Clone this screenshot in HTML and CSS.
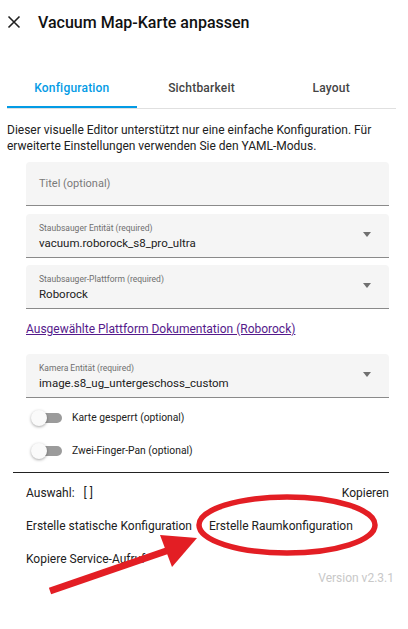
FILE: index.html
```html
<!DOCTYPE html>
<html>
<head>
<meta charset="utf-8">
<link rel="stylesheet" href="styles.css">
</head>
<body>
<div class="page">
  <header class="header">
    <svg class="close" width="14" height="14" viewBox="0 0 14 14"><path d="M1.5 1.5 L12.5 12.5 M12.5 1.5 L1.5 12.5" stroke="#212121" stroke-width="1.6" fill="none"/></svg>
    <h1 class="title">Vacuum Map-Karte anpassen</h1>
  </header>
  <nav class="tabs">
    <div class="tab active">Konfiguration</div>
    <div class="tab">Sichtbarkeit</div>
    <div class="tab">Layout</div>
  </nav>
  <p class="desc">Dieser visuelle Editor unterstützt nur eine einfache Konfiguration. Für erweiterte Einstellungen verwenden Sie den YAML-Modus.</p>
  <div class="form">
    <div class="field plain"><span class="placeholder">Titel (optional)</span></div>
    <div class="field">
      <div class="fcol"><span class="label">Staubsauger Entität (required)</span><span class="value">vacuum.roborock_s8_pro_ultra</span></div>
      <span class="arrow"></span>
    </div>
    <div class="field">
      <div class="fcol"><span class="label">Staubsauger-Plattform (required)</span><span class="value">Roborock</span></div>
      <span class="arrow"></span>
    </div>
    <a class="doclink" href="#">Ausgewählte Plattform Dokumentation (Roborock)</a>
    <div class="field">
      <div class="fcol"><span class="label">Kamera Entität (required)</span><span class="value">image.s8_ug_untergeschoss_custom</span></div>
      <span class="arrow"></span>
    </div>
    <div class="toggles">
      <div class="toggle-row"><span class="switch"><span class="knob"></span></span><span class="tlabel">Karte gesperrt (optional)</span></div>
      <div class="toggle-row"><span class="switch"><span class="knob"></span></span><span class="tlabel">Zwei-Finger-Pan (optional)</span></div>
    </div>
  </div>
  <hr class="divider">
  <div class="bottom">
    <div class="row between"><span>Auswahl:&nbsp;&nbsp; [ ]</span><span>Kopieren</span></div>
    <div class="row"><span>Erstelle statische Konfiguration</span><span class="gap-item">Erstelle Raumkonfiguration</span></div>
    <div class="row"><span>Kopiere Service-Aufruf</span></div>
    <div class="version">Version v2.3.1</div>
  </div>
  <svg class="annot" width="408" height="629" viewBox="0 0 408 629">
    <ellipse cx="287" cy="525" rx="88" ry="28" fill="none" stroke="#e31e24" stroke-width="5.5"/>
    <line x1="50" y1="591" x2="172" y2="549" stroke="#e31e24" stroke-width="7"/>
    <polygon points="197,538 160,535 172,567" fill="#e31e24"/>
  </svg>
</div>
</body>
</html>
```
FILE: styles.css
```css
* { box-sizing: border-box; }
html, body { margin: 0; padding: 0; background: #fff; }
body { font-family: Roboto, "Noto Sans", sans-serif; color: #212121; }
.page { position: relative; width: 408px; height: 629px; overflow: hidden; }
.header { display: flex; align-items: center; height: 44px; padding-left: 7px; }
.close { flex: none; }
.title { margin: 0 0 0 17px; font-size: 16px; font-weight: 500; color: #111; letter-spacing: 0; }
.tabs { display: flex; margin: 24px 12px 0 7px; border-bottom: 1px solid #e0e0e0; }
.tab { flex: 1; height: 40px; display: flex; align-items: center; justify-content: center; font-size: 12px; font-weight: 500; color: #444; letter-spacing: 0.2px; }
.tab.active { color: #039be5; box-shadow: inset 0 -2px 0 #039be5; }
.desc { margin: 13px 10px 0 7px; font-size: 12px; line-height: 16px; color: #212121; }
.form { padding: 8px 19px 0 26px; display: flex; flex-direction: column; }
.field { background: #f5f5f5; border-radius: 4px 4px 0 0; border-bottom: 1px solid #8a8a8a; height: 44px; display: flex; align-items: center; padding: 0 18px 0 13px; margin-bottom: 7px; }
.field.plain { margin-bottom: 8px; }
.fcol { flex: 1; display: flex; flex-direction: column; padding-top: 3px; }
.placeholder { font-size: 11px; color: #7a7a7a; }
.label { font-size: 8.5px; color: #6f6f6f; line-height: 11px; }
.value { font-size: 11.5px; color: #212121; line-height: 16px; margin-top: 1px; }
.arrow { width: 0; height: 0; border-left: 4.5px solid transparent; border-right: 4.5px solid transparent; border-top: 5px solid #707070; margin-top: -3px; }
.doclink { font-size: 12px; color: #551a8b; text-decoration: underline; margin: 6px 0 18px; line-height: 14px; }
.toggles { margin-top: -4px; }
.toggle-row { display: flex; align-items: center; height: 33px; padding-left: 7px; }
.switch { position: relative; flex: none; width: 29px; height: 10px; background: #9b9b9b; border-radius: 5px; margin-right: 10px; }
.knob { position: absolute; left: -2px; top: -3px; width: 16px; height: 16px; border-radius: 50%; background: #fafafa; box-shadow: 0 1px 3px rgba(0,0,0,0.35); }
.tlabel { font-size: 10.3px; color: #212121; }
.divider { margin: 5px 19px 0 13px; border: 0; border-top: 1px solid #222; }
.bottom { padding: 0 19px 0 26px; font-size: 12px; color: #212121; }
.row { display: flex; height: 33px; align-items: center; }
.row:first-child { margin-top: 3px; }
.row.between { justify-content: space-between; }
.gap-item { margin-left: 17px; }
.version { text-align: right; color: #c8c8c8; font-size: 12px; line-height: 14px; margin-right: -5px; margin-top: -4px; }
.annot { position: absolute; left: 0; top: 0; pointer-events: none; }
```
